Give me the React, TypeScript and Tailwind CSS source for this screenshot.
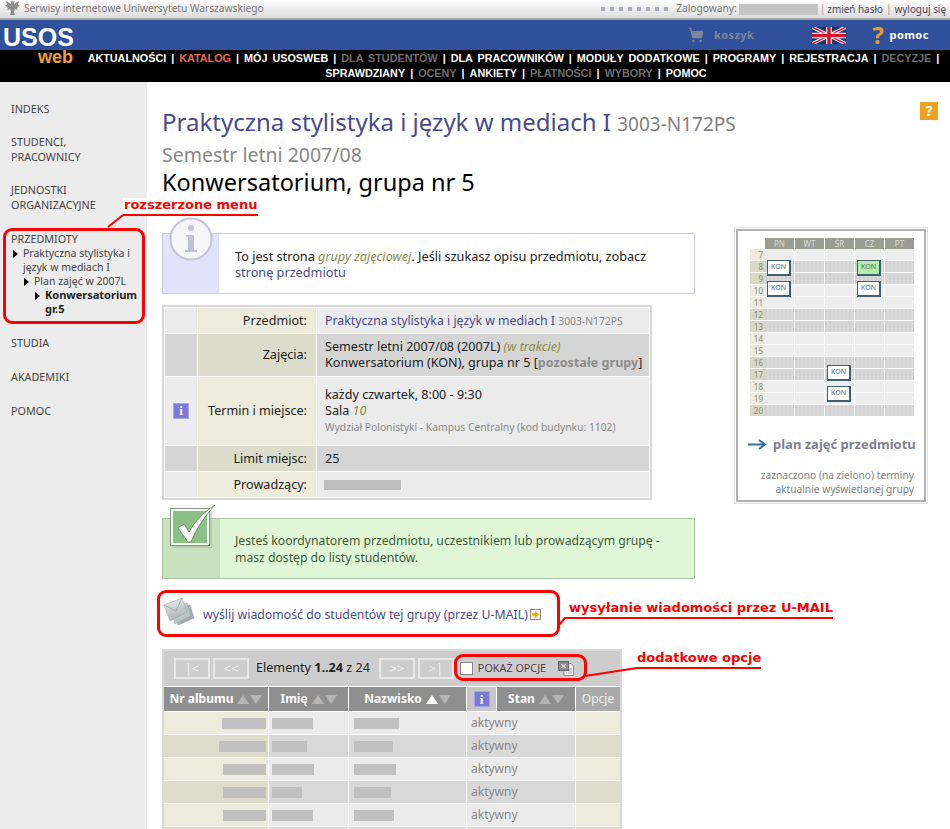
// App.tsx
import React from "react";
import { ShoppingCart } from "lucide-react";

const navLine1 = [
  ["AKTUALNOŚCI", "on"],
  ["KATALOG", "active"],
  ["MÓJ USOSWEB", "on"],
  ["DLA STUDENTÓW", "off"],
  ["DLA PRACOWNIKÓW", "on"],
  ["MODUŁY DODATKOWE", "on"],
  ["PROGRAMY", "on"],
  ["REJESTRACJA", "on"],
  ["DECYZJE", "off"],
];

const navLine2 = [
  ["SPRAWDZIANY", "on"],
  ["OCENY", "off"],
  ["ANKIETY", "on"],
  ["PŁATNOŚCI", "off"],
  ["WYBORY", "off"],
  ["POMOC", "on"],
];

const NavLine = ({ items, trailing }: { items: string[][]; trailing?: boolean }) => (
  <div className="whitespace-nowrap">
    {items.map(([label, state], i) => (
      <React.Fragment key={label}>
        <span
          className={
            state === "active"
              ? "text-[#e8655a]"
              : state === "off"
                ? "text-[#6e6e6e]"
                : "text-white"
          }
        >
          {label}
        </span>
        {(i < items.length - 1 || trailing) && <span className="text-white mx-[5px]">|</span>}
      </React.Fragment>
    ))}
  </div>
);

const InfoSquare = () => (
  <span className="inline-flex w-[16px] h-[16px] items-center justify-center bg-[#7a7ad6] border border-[#a5a5e6] text-white font-bold text-[13px] leading-none font-['Liberation_Serif',serif]">
    i
  </span>
);

const UkFlag = () => (
  <svg width="34" height="17" viewBox="0 0 60 30" className="block">
    <rect width="60" height="30" fill="#22306e" />
    <path d="M0 0L60 30M60 0L0 30" stroke="#fff" strokeWidth="6" />
    <path d="M0 0L60 30M60 0L0 30" stroke="#cf142b" strokeWidth="2.5" />
    <path d="M30 0V30M0 15H60" stroke="#fff" strokeWidth="10" />
    <path d="M30 0V30M0 15H60" stroke="#cf142b" strokeWidth="6" />
  </svg>
);

const Eagle = () => (
  <svg width="18" height="18" viewBox="0 0 18 18" className="block -mt-[2px]">
    <path
      d="M9 1l1 2 1.500-1-.5 3 5-3-1 4 2 0-3 3 1 2-3-1-1 3 1 3H7l1-3-1-3-3 1 1-2-3-3 2 0-1-4 5 3-.5-3L8 3z"
      fill="#8d8d8d"
    />
  </svg>
);

const SideItem = ({ children, className = "" }: { children: React.ReactNode; className?: string }) => (
  <div className={`pl-[11px] text-[10.800px] leading-[15px] text-[#444] ${className}`}>
    {children}
  </div>
);

const Arrow = () => (
  <span className="absolute left-[-10px] top-[4px] w-0 h-0 border-y-[4px] border-y-transparent border-l-[5px] border-l-black" />
);

const Sidebar = () => (
  <aside className="w-[147px] shrink-0 bg-[#ececec] pt-[19px]">
    <SideItem>INDEKS</SideItem>
    <SideItem className="mt-[18px]">
      STUDENCI,
      <br />
      PRACOWNICY
    </SideItem>
    <SideItem className="mt-[18px]">
      JEDNOSTKI
      <br />
      ORGANIZACYJNE
    </SideItem>
    <SideItem className="mt-[19px]">PRZEDMIOTY</SideItem>
    <div className="text-[10.500px] leading-[14px] text-[#444]">
      <div className="relative ml-[23px] mr-[6px]">
        <Arrow />
        Praktyczna stylistyka i język w mediach I
      </div>
      <div className="relative ml-[34px]">
        <Arrow />
        Plan zajęć w 2007L
      </div>
      <div className="relative ml-[45px] text-[11px] font-bold text-[#222]">
        <Arrow />
        Konwersatorium
        <br />
        gr.5
      </div>
    </div>
    <SideItem className="mt-[19px]">STUDIA</SideItem>
    <SideItem className="mt-[19px]">AKADEMIKI</SideItem>
    <SideItem className="mt-[19px]">POMOC</SideItem>
  </aside>
);

const InfoBig = () => (
  <svg width="44" height="44" viewBox="0 0 44 44" className="block">
    <circle cx="22" cy="22" r="20.500" fill="#f6f6fa" stroke="#c3c3d6" strokeWidth="2" />
    <circle cx="22" cy="11" r="3" fill="#c1c1d4" />
    <path d="M17 18h8v15h3v2H16v-2h3V20h-2z" fill="#c1c1d4" />
  </svg>
);

const CheckBig = () => (
  <svg width="50" height="44" viewBox="0 0 50 44" className="block">
    <rect x="3" y="6" width="40" height="37" fill="#9db89a" opacity="0.5" />
    <rect x="1.500" y="3.500" width="39" height="37" fill="#f4f8f2" stroke="#7f9c7d" />
    <rect x="4" y="6" width="34" height="32" fill="#8cbf85" />
    <path d="M9 23l6-4 5 8C26 16 35 7 46 0 36 11 27 24 22 37h-3z" fill="#fff" stroke="#5f8059" strokeWidth="0.800" />
  </svg>
);

const MailIcon = () => (
  <svg width="32" height="28" viewBox="0 0 32 28" className="block -mt-[6px] ml-[1px]">
    <defs>
      <linearGradient id="mailFill" x1="0" y1="0" x2="0.3" y2="1">
        <stop offset="0" stopColor="#eef1f1" />
        <stop offset="1" stopColor="#aab3b3" />
      </linearGradient>
    </defs>
    <path d="M12 14l15-7 4 13-16 7z" fill="#a3acac" stroke="#8f9999" strokeWidth="0.500" />
    <path d="M8 12l16-7 4 13-16 8z" fill="#bcc4c4" stroke="#949e9e" strokeWidth="0.500" />
    <path d="M1 7L19 0l5 14L7 23z" fill="url(#mailFill)" stroke="#98a2a2" strokeWidth="0.500" />
    <path d="M1 7l12 6 6-13" fill="none" stroke="#8f9999" strokeWidth="0.700" />
  </svg>
);

const DocIcon = () => (
  <svg width="16" height="15" viewBox="0 0 16 15" className="ml-[12px]">
    <path d="M6 2.500h7l2.500 2.500v9.500H6z" fill="#f1f1f1" stroke="#8b8b8b" />
    <path d="M10 8h4M10 10h4M10 12h4M8 12h1" stroke="#aaa" />
    <rect x="0.500" y="0.500" width="10" height="9" fill="#8a8a8a" stroke="#666" />
    <path d="M3 3l5 4M8 3L3 7" stroke="#fff" />
  </svg>
);

const GoIcon = () => (
  <svg width="11" height="11" viewBox="0 0 11 11" className="ml-[2px] -mt-[2px]">
    <rect x="0.500" y="0.500" width="10" height="10" fill="#fff8d8" stroke="#8d8d8d" />
    <path d="M2 4.300h3V2l4 3.500L5 9V6.700H2z" fill="#f0a010" />
  </svg>
);

type RowProps = {
  label: string;
  dark: boolean;
  height: string;
  icon?: boolean;
  children: React.ReactNode;
};

const DetailRow = ({ label, dark, height, icon, children }: RowProps) => (
  <tr className={height}>
    <td className={`w-[33px] text-center align-middle border border-white ${dark ? "bg-[#d5d5d5]" : "bg-[#ebebeb]"}`}>
      {icon && <InfoSquare />}
    </td>
    <td className={`w-[119px] pr-[9px] text-right align-middle border border-white ${dark ? "bg-[#dcdccb]" : "bg-[#ecebdc]"}`}>
      {label}:
    </td>
    <td className={`pl-[8px] align-middle border border-white ${dark ? "bg-[#d5d5d5]" : "bg-[#ebebeb]"}`}>
      {children}
    </td>
  </tr>
);

const DetailTable = () => (
  <div className="mt-[11px] w-[490px] border-2 border-[#d8d8d8]">
    <table className="w-full border-collapse table-fixed text-[12.600px] leading-[16px] text-[#222]">
      <tbody>
        <DetailRow label="Przedmiot" dark={false} height="h-[26px]">
          <span className="text-[12.300px] text-[#4a4a8c]">Praktyczna stylistyka i język w mediach I</span>{" "}
          <span className="text-[10.300px] text-[#888]">3003-N172PS</span>
        </DetailRow>
        <DetailRow label="Zajęcia" dark height="h-[43px]">
          Semestr letni 2007/08 (2007L) <i className="text-[#8c8c46]">(w trakcie)</i>
          <br />
          Konwersatorium (KON), grupa nr 5 [<b className="text-[#8d8d8d]">pozostałe grupy</b>]
        </DetailRow>
        <DetailRow label="Termin i miejsce" dark={false} height="h-[69px]" icon>
          każdy czwartek, 8:00 - 9:30
          <br />
          Sala <i className="text-[#8c8c46]">10</i>
          <div className="text-[10.300px] text-[#888]">Wydział Polonistyki - Kampus Centralny (kod budynku: 1102)</div>
        </DetailRow>
        <DetailRow label="Limit miejsc" dark height="h-[26px]">
          25
        </DetailRow>
        <DetailRow label="Prowadzący" dark={false} height="h-[26px]">
          <div className="w-[77px] h-[10px] bg-[#bdbdbd] ml-[-1px]" />
        </DetailRow>
      </tbody>
    </table>
  </div>
);

const hours = [7, 8, 9, 10, 11, 12, 13, 14, 15, 16, 17, 18, 19, 20];
const darkHours = [8, 9, 12, 13, 16, 17, 20];

const KonBox = ({ green, className }: { green?: boolean; className: string }) => (
  <div
    className={`absolute w-[24px] h-[16px] flex items-center justify-center text-[7px] text-[#666] border border-[#3f5f70] border-r-2 border-b-2 ${green ? "bg-[#b0f0a8]" : "bg-white"} ${className}`}
  >
    KON
  </div>
);

const Schedule = () => (
  <div className="relative w-[165px] ml-[12px] mt-[7px]">
    <div className="grid grid-cols-[15px_repeat(5,30px)] text-[8px] text-[#888]">
      <div className="h-[11px]" />
      {["PN", "WT", "ŚR", "CZ", "PT"].map((d) => (
        <div key={d} className="h-[11px] bg-[#9a9e92] border-r border-white text-center leading-[11px] text-[#ddd]">
          {d}
        </div>
      ))}
      {hours.map((h) => {
        const dark = darkHours.includes(h);
        return (
          <React.Fragment key={h}>
            <div className={`h-[12px] border-b border-white pr-[2px] text-right leading-[11px] ${dark ? "bg-[#d8d8c6]" : "bg-[#ecebdc]"}`}>
              {h}
            </div>
            {[0, 1, 2, 3, 4].map((c) => (
              <div
                key={c}
                className={`h-[12px] border-b border-r border-white ${dark ? "bg-[repeating-linear-gradient(90deg,#d0d0d0_0,#d0d0d0_2px,#dbdbdb_2px,#dbdbdb_4px)]" : "bg-[#ededed]"}`}
              />
            ))}
          </React.Fragment>
        );
      })}
    </div>
    <KonBox className="left-[17px] top-[22px]" />
    <KonBox className="left-[17px] top-[43px]" />
    <KonBox green className="left-[107px] top-[22px]" />
    <KonBox className="left-[107px] top-[43px]" />
    <KonBox className="left-[77px] top-[127px]" />
    <KonBox className="left-[77px] top-[148px]" />
  </div>
);

const ScheduleBox = () => (
  <div className="ml-[41px] mt-[12px] w-[190px] h-[273px] shrink-0 border-2 border-[#b0b0b0] outline outline-1 outline-offset-1 outline-[#e0e0e0]">
    <Schedule />
    <div className="mt-[18px] ml-[10px] flex items-center gap-[5px] whitespace-nowrap">
      <svg width="20" height="11" viewBox="0 0 20 11">
        <path d="M0 5.500H16M11 1l6 4.500-6 4.500" fill="none" stroke="#33709a" strokeWidth="2" />
      </svg>
      <span className="font-bold text-[13px] leading-[18px] text-[#808090]">plan zajęć przedmiotu</span>
    </div>
    <div className="mt-[15px] pr-[10px] text-right text-[10.200px] leading-[14px] text-[#808080]">
      zaznaczono (na zielono) terminy
      <br />
      aktualnie wyświetlanej grupy
    </div>
  </div>
);

const Triangles = ({ up }: { up?: boolean }) => (
  <span className="inline-flex gap-[1px] ml-[4px]">
    <span className={`w-0 h-0 border-x-[6px] border-x-transparent border-b-[9px] ${up ? "border-b-white" : "border-b-[#b5b5b5]"}`} />
    <span className="w-0 h-0 border-x-[6px] border-x-transparent border-t-[9px] border-t-[#b5b5b5]" />
  </span>
);

const PagerBtn = ({ children }: { children: React.ReactNode }) => (
  <span className="w-[36px] h-[21px] border-2 border-[#e8e8e8] text-[#f2f2f2] text-[13px] flex items-center justify-center">
    {children}
  </span>
);

const Blur = ({ w, right, offset = 0 }: { w: number; right?: boolean; offset?: number }) => (
  <div
    className={`h-[11px] bg-[#c0c0c0] ${right ? "ml-auto" : ""}`}
    style={{ width: w, marginLeft: right ? undefined : offset, marginRight: right ? offset : undefined }}
  />
);

const students = [
  [44, 41, 45],
  [47, 35, 39],
  [43, 42, 42],
  [43, 30, 37],
  [43, 41, 40],
];

const StudentsTable = () => (
  <div className="mt-[8px] w-[460px] border-2 border-[#d8d8d8] text-[12px]">
    <div className="h-[35px] bg-[#cdcdcd] flex items-center pl-[10px]">
      <PagerBtn>|&lt;</PagerBtn>
      <span className="ml-[3px]"><PagerBtn>&lt;&lt;</PagerBtn></span>
      <span className="ml-[7px] text-[12.600px] text-[#222] whitespace-nowrap">
        Elementy <b>1..24</b> z 24
      </span>
      <span className="ml-[9px]"><PagerBtn>&gt;&gt;</PagerBtn></span>
      <span className="ml-[3px]"><PagerBtn>&gt;|</PagerBtn></span>
      <span className="ml-[6px] w-[13px] h-[13px] bg-white border border-[#888]" />
      <span className="ml-[5px] text-[10.800px] text-[#5a3a4a] whitespace-nowrap">POKAŻ OPCJE</span>
      <DocIcon />
    </div>
    <div className="grid grid-cols-[104px_79px_117px_29px_78px_1fr] gap-x-px bg-white">
      {[
        ["Nr albumu", false],
        ["Imię", false],
        ["Nazwisko", true],
      ].map(([label, up]) => (
        <div key={label as string} className="h-[24px] mt-px bg-[#8f8f8f] flex items-center justify-center text-white font-bold text-[12px] whitespace-nowrap">
          {label}
          <Triangles up={up as boolean} />
        </div>
      ))}
      <div className="h-[24px] mt-px bg-[#c6c6c6] flex items-center justify-center">
        <InfoSquare />
      </div>
      <div className="h-[24px] mt-px bg-[#8f8f8f] flex items-center justify-center text-white font-bold whitespace-nowrap">
        Stan
        <Triangles />
      </div>
      <div className="h-[24px] mt-px bg-[#a9a9a9] flex items-center justify-center text-[#f0f0f0]">Opcje</div>
      {students.map(([a, b, c], i) => {
        const dark = i % 2 === 1;
        const grey = dark ? "bg-[#d8d8d8]" : "bg-[#ebebeb]";
        const olive = dark ? "bg-[#deddcb]" : "bg-[#ecebdc]";
        return (
          <React.Fragment key={i}>
            <div className={`h-[22px] mt-px flex items-center ${olive}`}>
              <Blur w={a} right offset={2} />
            </div>
            <div className={`h-[22px] mt-px flex items-center ${grey}`}>
              <Blur w={b} offset={3} />
            </div>
            <div className={`h-[22px] mt-px flex items-center ${grey}`}>
              <Blur w={c} offset={5} />
            </div>
            <div className={`h-[22px] mt-px col-span-2 flex items-center pl-[4px] text-[#888] ${grey}`}>aktywny</div>
            <div className={`h-[22px] mt-px ${olive}`} />
          </React.Fragment>
        );
      })}
      {/* next row is cut by the bottom of the page */}
      <div className="h-[22px] mt-px bg-[#deddcb]" />
      <div className="h-[22px] mt-px bg-[#d8d8d8]" />
      <div className="h-[22px] mt-px bg-[#d8d8d8]" />
      <div className="h-[22px] mt-px col-span-2 bg-[#d8d8d8]" />
      <div className="h-[22px] mt-px bg-[#deddcb]" />
    </div>
  </div>
);

// red notes pasted on top of the page
const Annotations = () => (
  <>
    <div className="absolute left-[123px] top-[198px] h-[18px] bg-white pl-[1px] pr-[1px] border-b-2 border-[#ff0000] text-[#ff0000] font-bold text-[13px] leading-[14px] font-['DejaVu_Sans',sans-serif] whitespace-nowrap">
      rozszerzone menu
    </div>
    <div className="absolute left-[3px] top-[228px] w-[142px] h-[96px] border-[3px] border-[#ff0000] rounded-[9px]" />
    <div className="absolute left-[157px] top-[590px] w-[403px] h-[47px] border-[3px] border-[#ff0000] rounded-[9px]" />
    <div className="absolute left-[569px] top-[600px] h-[19px] border-b-2 border-[#ff0000] text-[#ff0000] font-bold text-[13px] leading-[16px] font-['DejaVu_Sans',sans-serif] whitespace-nowrap">
      wysyłanie wiadomości przez U-MAIL
    </div>
    <div className="absolute left-[637px] top-[650px] h-[19px] border-b-2 border-[#ff0000] text-[#ff0000] font-bold text-[13px] leading-[16px] font-['DejaVu_Sans',sans-serif] whitespace-nowrap">
      dodatkowe opcje
    </div>
    <div className="absolute left-[454px] top-[654px] w-[133px] h-[27px] border-[3px] border-[#ff0000] rounded-[9px]" />
    <svg width="950" height="829" className="absolute left-0 top-0 pointer-events-none">
      <path d="M108 227L123 215" stroke="#ff0000" strokeWidth="2" fill="none" />
      <path d="M559 625L565 618H569" stroke="#ff0000" strokeWidth="2" fill="none" />
      <path d="M585 676L637 668" stroke="#ff0000" strokeWidth="2" fill="none" />
    </svg>
  </>
);

export default function App() {
  return (
    <div className="relative w-[950px] h-[829px] overflow-hidden bg-white font-['Noto_Sans',sans-serif] text-[12px]">
      <header className="h-[20px] bg-gradient-to-b from-white to-[#dcdcdc] border-b-2 border-[#a8a8a8] flex items-center pl-[3px] pr-[4px] text-[10.200px] text-[#777]">
        <Eagle />
        <span className="ml-[3px]">Serwisy internetowe Uniwersytetu Warszawskiego</span>
        <span className="ml-auto flex gap-[5px]">
          {[0, 1, 2, 3, 4, 5, 6, 7].map((d) => (
            <span key={d} className="w-[4px] h-[4px] bg-[#a9afc0]" />
          ))}
        </span>
        <span className="ml-[8px]">Zalogowany:</span>
        <span className="ml-[2px] w-[79px] h-[11px] bg-[#c4c4c4]" />
        <span className="ml-[2px] text-[#9a9a9a]">|</span>
        <span className="ml-[2px] text-[9.900px] text-[#445]">zmień hasło</span>
        <span className="ml-[3px] text-[#9a9a9a]">|</span>
        <span className="ml-[3px] text-[9.900px] text-[#445]">wyloguj się</span>
      </header>
      <div className="h-[30px] bg-[#30509b] flex items-center">
        <ShoppingCart className="ml-[688px] text-[#7d8597]" size={16} fill="#7d8597" />
        <span className="ml-[10px] text-[11px] font-bold text-[#7d8597] tracking-[0.4px]">koszyk</span>
        <span className="ml-[58px]"><UkFlag /></span>
        <span className="ml-[26px] text-[#e8a020] font-bold text-[24px] leading-none">?</span>
        <span className="ml-[6px] text-[11px] font-bold text-white tracking-[0.4px]">pomoc</span>
      </div>
      <nav className="h-[32px] bg-black pl-[85px] pr-[3px] pt-[1px] text-center font-bold text-[10.800px] leading-[15px] [word-spacing:2px] font-['Liberation_Sans',sans-serif]">
        <NavLine items={navLine1} trailing />
        <NavLine items={navLine2} />
      </nav>
      {/* logo sits across the blue and the black bar */}
      <div className="absolute left-[3px] top-[25px] text-white font-bold text-[25px] leading-[24px] font-['Liberation_Sans',sans-serif]">
        USOS
      </div>
      <div className="absolute left-[38px] top-[50px] text-[#f0a030] font-bold text-[18px] leading-[14px] font-['Liberation_Sans',sans-serif]">
        web
      </div>

      <div className="flex h-[747px]">
        <Sidebar />
        <main className="relative flex-1 pl-[15px]">
          <div className="pt-[24px]">
            <h1 className="text-[24px] leading-[32px] text-[#4a4a8c] whitespace-nowrap">
              Praktyczna stylistyka i język w mediach I{" "}
              <span className="text-[19px] text-[#808080]">3003-N172PS</span>
            </h1>
            <div className="mt-[3px] text-[19.500px] leading-[24px] text-[#888]">Semestr letni 2007/08</div>
            <div className="mt-[3px] text-[23.500px] leading-[24px] text-black">Konwersatorium, grupa nr 5</div>
          </div>
          <div className="absolute left-[773px] top-[20px] w-[18px] h-[18px] bg-[#f0a020] text-white font-bold text-[14px] leading-[18px] text-center">
            ?
          </div>
          <div className="flex mt-[23px]">
            <div className="w-[533px] shrink-0">
              <div className="relative mt-[16px] h-[61px] border border-[#ccccdf] flex">
                <div className="w-[56px] bg-[#e2e2fa]" />
                <div className="absolute left-[6px] top-[-17px]">
                  <InfoBig />
                </div>
                <div className="pl-[16px] pt-[14px] text-[12.700px] leading-[16px] text-[#222]">
                  To jest strona <i className="text-[#8c8c46]">grupy zajęciowej</i>. Jeśli szukasz opisu przedmiotu, zobacz
                  <br />
                  <span className="text-[#4a4a8c]">stronę przedmiotu</span>
                </div>
              </div>
              <DetailTable />
              <div className="relative mt-[18px] h-[61px] border border-[#a9c4a0] flex bg-[#dff7d6]">
                <div className="w-[57px] bg-[#c8e2c0]" />
                <div className="absolute left-[6px] top-[-14px]">
                  <CheckBig />
                </div>
                <div className="pl-[15px] pt-[13px] text-[12.200px] leading-[17px] text-[#3f5a3a]">
                  Jesteś koordynatorem przedmiotu, uczestnikiem lub prowadzącym grupę -
                  <br />
                  masz dostęp do listy studentów.
                </div>
              </div>
              <div className="h-[52px] mt-[10px] flex items-center">
                <MailIcon />
                <span className="ml-[8px] text-[12.300px] text-[#4a4a8c] whitespace-nowrap">wyślij wiadomość do studentów tej grupy (przez U-MAIL)</span>
                <GoIcon />
              </div>
              <StudentsTable />
            </div>
            <ScheduleBox />
          </div>
        </main>
      </div>
      <Annotations />
    </div>
  );
}
